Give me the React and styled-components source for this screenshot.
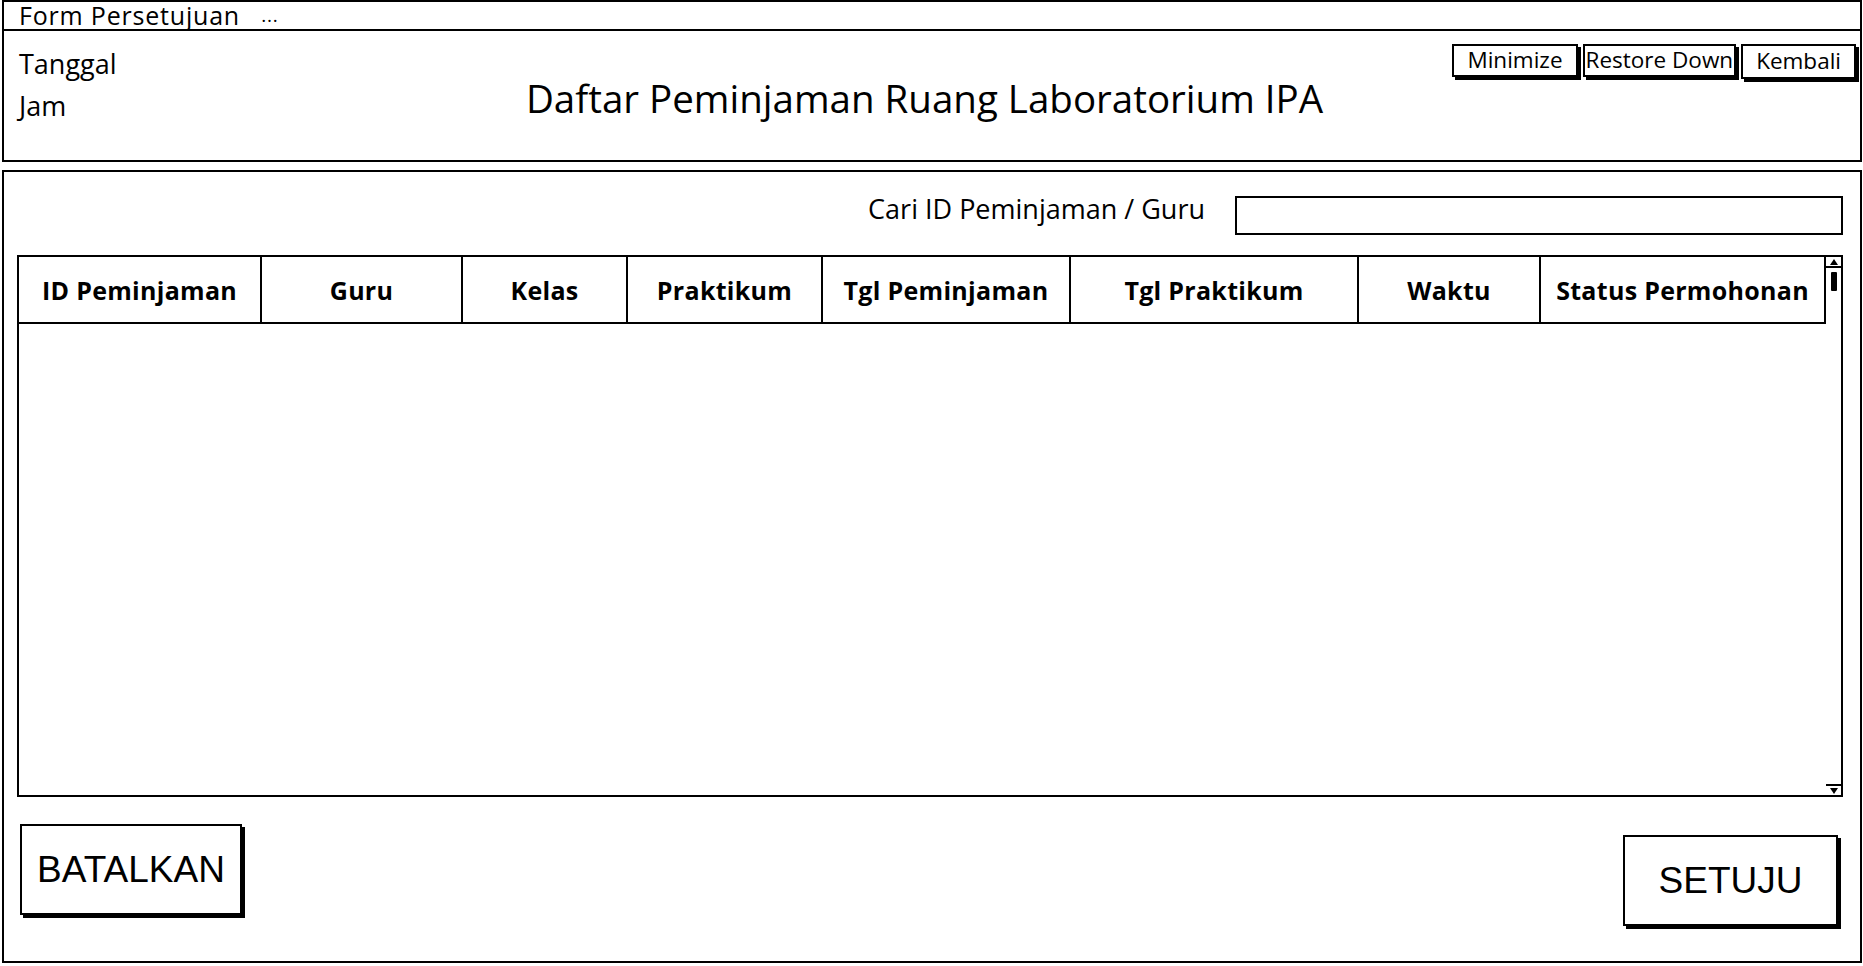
import styled, { createGlobalStyle } from "styled-components";

const GlobalStyle = createGlobalStyle`
  * { box-sizing: border-box; }
  html, body { margin: 0; padding: 0; background: #fff; }
  body {
    font-family: "Open Sans", "DejaVu Sans", sans-serif;
    color: #000;
  }
`;

const COLUMNS = [
  { label: "ID Peminjaman", width: 243 },
  { label: "Guru", width: 201 },
  { label: "Kelas", width: 165 },
  { label: "Praktikum", width: 195 },
  { label: "Tgl Peminjaman", width: 248 },
  { label: "Tgl Praktikum", width: 288 },
  { label: "Waktu", width: 182 },
  { label: "Status Permohonan", width: 0 },
];

export default function App() {
  const template = COLUMNS.map((c) => (c.width ? `${c.width}px` : "1fr")).join(" ");

  return (
    <>
      <GlobalStyle />
      <Window>
        <TitleBar>
          Form Persetujuan <Dots>...</Dots>
        </TitleBar>

        <Header>
          <Info>
            <InfoLine>Tanggal</InfoLine>
            <InfoLine>Jam</InfoLine>
          </Info>
          <Title>Daftar Peminjaman Ruang Laboratorium IPA</Title>
          <Controls>
            <ControlButton>Minimize</ControlButton>
            <ControlButton $tight>Restore Down</ControlButton>
            <ControlButton $low>Kembali</ControlButton>
          </Controls>
        </Header>

        <Main>
          <SearchRow>
            <SearchLabel>Cari ID Peminjaman / Guru</SearchLabel>
            <SearchInput />
          </SearchRow>

          <Table>
            <TableBody>
              <HeadRow style={{ gridTemplateColumns: template }}>
                {COLUMNS.map(({ label }) => (
                  <HeadCell key={label}>{label}</HeadCell>
                ))}
              </HeadRow>
            </TableBody>
            <Scrollbar>
              <ArrowBox $up>
                <Arrow $up />
              </ArrowBox>
              <Thumb />
              <Track />
              <ArrowBox>
                <Arrow />
              </ArrowBox>
            </Scrollbar>
          </Table>

          <ActionBar>
            <ActionButton>BATALKAN</ActionButton>
            <ActionButton $drop>SETUJU</ActionButton>
          </ActionBar>
        </Main>
      </Window>
    </>
  );
}

const Window = styled.div`
  width: 1863px;
  height: 966px;
  padding: 0 1px 3px 2px;
  display: flex;
  flex-direction: column;
`;

const TitleBar = styled.div`
  height: 31px;
  border: 2px solid #000;
  padding-left: 15px;
  display: flex;
  align-items: center;
  font-size: 25px;
  letter-spacing: 0.8px;
  line-height: 1;
  white-space: pre;
`;

const Dots = styled.span`
  margin-left: 14px;
  font-size: 19px;
`;

const Header = styled.header`
  height: 131px;
  border: 2px solid #000;
  border-top: none;
  display: grid;
  grid-template-columns: 1fr auto 1fr;
  padding: 0 4px 0 15px;
`;

const Info = styled.div`
  display: flex;
  flex-direction: column;
  gap: 10px;
  padding-top: 17px;
`;

const InfoLine = styled.div`
  font-size: 27px;
  line-height: 32px;
`;

const Title = styled.h1`
  margin: 0;
  align-self: center;
  font-size: 38.5px;
  font-weight: 400;
  padding: 4px 26px 0 0;
`;

const Controls = styled.div`
  justify-self: end;
  display: flex;
  align-items: flex-start;
  gap: 5px;
  padding-top: 13px;
`;

const ControlButton = styled.button`
  height: ${(p) => (p.$low ? 35 : 33)}px;
  padding: 0 ${(p) => (p.$tight ? 1 : 13)}px;
  border: 2px solid #000;
  background: #fff;
  box-shadow: 3px 3px 0 #000;
  font-family: "Open Sans", "DejaVu Sans", sans-serif;
  font-size: 22.5px;
  line-height: 1;
  color: #000;
`;

const Main = styled.main`
  flex: 1;
  margin-top: 8px;
  border: 2px solid #000;
  padding: 24px 17px 0 13px;
  display: flex;
  flex-direction: column;
`;

const SearchRow = styled.div`
  display: flex;
  justify-content: flex-end;
  align-items: flex-start;
  gap: 30px;
`;

const SearchLabel = styled.label`
  font-size: 27px;
  line-height: 26px;
`;

const SearchInput = styled.div`
  width: 608px;
  height: 39px;
  border: 2px solid #000;
`;

const Table = styled.div`
  margin-top: 20px;
  height: 542px;
  border: 2px solid #000;
  display: grid;
  grid-template-columns: 1fr 15px;
`;

const TableBody = styled.div`
  display: flex;
  flex-direction: column;
`;

const HeadRow = styled.div`
  display: grid;
  height: 67px;
`;

const HeadCell = styled.div`
  display: flex;
  align-items: center;
  justify-content: center;
  border-right: 2px solid #000;
  border-bottom: 2px solid #000;
  font-size: 25px;
  letter-spacing: 0.3px;
  font-weight: 700;
  white-space: nowrap;
`;

const Scrollbar = styled.div`
  display: flex;
  flex-direction: column;
  align-items: center;
`;

const ArrowBox = styled.div`
  width: 100%;
  height: 11px;
  display: flex;
  align-items: center;
  justify-content: center;
  border-${(p) => (p.$up ? "bottom" : "top")}: 2px solid #000;
`;

const Arrow = styled.span`
  width: 0;
  height: 0;
  border-left: 4px solid transparent;
  border-right: 4px solid transparent;
  border-${(p) => (p.$up ? "bottom" : "top")}: 6px solid #000;
`;

const Thumb = styled.div`
  margin-top: 4px;
  width: 6px;
  height: 19px;
  background: #000;
  border-radius: 1px;
`;

const Track = styled.div`
  flex: 1;
`;

const ActionBar = styled.div`
  display: flex;
  justify-content: space-between;
  align-items: flex-start;
  padding: 27px 5px 0 3px;
`;

const ActionButton = styled.button`
  margin-top: ${(p) => (p.$drop ? 11 : 0)}px;
  width: ${(p) => (p.$drop ? 215 : 222)}px;
  height: 91px;
  border: 2px solid #000;
  background: #fff;
  box-shadow: 3px 3px 0 #000;
  font-family: "Liberation Sans", Arial, sans-serif;
  font-size: 37px;
  color: #000;
  padding: 0;
`;
